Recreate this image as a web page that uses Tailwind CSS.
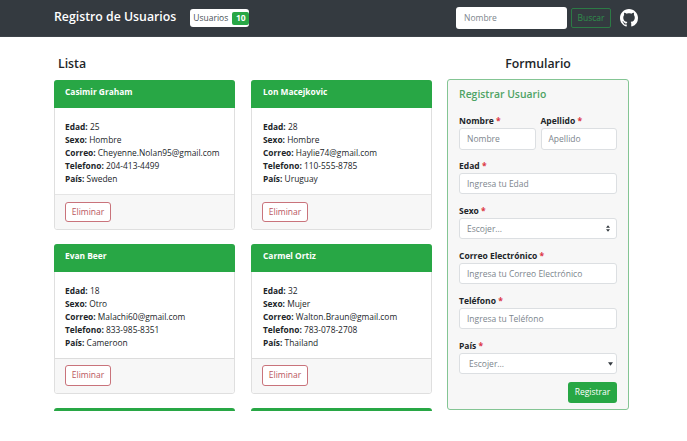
<!doctype html>
<html lang="es">
<head>
<meta charset="UTF-8">
<meta name="viewport" content="width=device-width, initial-scale=1.0">
<title>Registro de Usuarios</title>
<script src="https://cdn.jsdelivr.net/npm/@tailwindcss/browser@4"></script>
</head>
<body class="bg-white font-['Open_Sans',sans-serif] text-[#212529] h-[441px] w-[687px] overflow-hidden">
  <!-- navbar -->
  <nav class="h-[37px] bg-[#343a40] border-b border-b-[#3d4349] flex items-center pl-[54px] pr-[49px]">
    <div class="text-white text-[12.3px] font-semibold -mt-[2px]">Registro de Usuarios</div>
    <div class="ml-[14px] w-[59px] h-[18px] bg-white rounded-[3px] flex items-center pl-[3px] gap-[4px] text-[8.5px] text-[#495057]">
      Usuarios
      <span class="bg-[#28a745] text-white font-bold text-[8.5px] rounded-[2px] w-[17px] h-[13px] flex items-center justify-center">10</span>
    </div>
    <div class="grow"></div>
    <div class="w-[111px] h-[22px] bg-white rounded-[3px] flex items-center pl-[8px] text-[8.5px] text-[#7d868d]">Nombre</div>
    <div class="ml-[4px] w-[40px] h-[20px] border border-[#2c7a45] rounded-[2px] flex items-center justify-center text-[8.5px] text-[#2f8f4b]">Buscar</div>
    <svg class="ml-[9px] w-[18px] h-[18px]" viewBox="0 0 16 16" fill="#fff"><path d="M8 0C3.58 0 0 3.58 0 8c0 3.54 2.29 6.53 5.47 7.59.4.07.55-.17.55-.38 0-.19-.01-.82-.01-1.49-2.01.37-2.53-.49-2.69-.94-.09-.23-.48-.94-.82-1.13-.28-.15-.68-.52-.01-.53.63-.01 1.08.58 1.23.82.72 1.21 1.87.87 2.33.66.07-.52.28-.87.51-1.07-1.78-.2-3.64-.89-3.64-3.95 0-.87.31-1.59.82-2.15-.08-.2-.36-1.02.08-2.12 0 0 .67-.21 2.2.82.64-.18 1.32-.27 2-.27s1.36.09 2 .27c1.53-1.04 2.2-.82 2.2-.82.44 1.1.16 1.92.08 2.12.51.56.82 1.27.82 2.15 0 3.07-1.87 3.75-3.65 3.95.29.25.54.73.54 1.48 0 1.07-.01 1.93-.01 2.2 0 .21.15.46.55.38A8.01 8.01 0 0 0 16 8c0-4.42-3.58-8-8-8z"/></svg>
  </nav>

  <main class="h-[374px] overflow-hidden flex pl-[54px]">
    <!-- lista -->
    <section class="w-[378px]">
      <h2 class="pl-[4px] h-[43px] pt-[18px] text-[12.3px] font-semibold leading-[18px]">Lista</h2>
      <div class="grid grid-cols-[181px_181px] gap-x-[16px] gap-y-[14px]">

        <article class="h-[150px] border border-[#dfdfdf] rounded-[3px] flex flex-col">
          <div class="h-[28px] -mx-px -mt-px bg-[#28a745] rounded-t-[3px] text-white text-[8.4px] font-bold pl-[11px] pt-[6px]">Casimir Graham</div>
          <div class="grow pl-[10px] pt-[13.4px] text-[8.4px] leading-[12.8px]">
            <p><b>Edad:</b> 25</p>
            <p><b>Sexo:</b> Hombre</p>
            <p><b>Correo:</b> Cheyenne.Nolan95@gmail.com</p>
            <p><b>Telefono:</b> 204-413-4499</p>
            <p><b>País:</b> Sweden</p>
          </div>
          <div class="h-[35px] bg-[#f7f7f7] border-t border-t-[#e5e5e5] rounded-b-[3px] pl-[10px] pt-[7px]">
            <div class="w-[46px] h-[20px] bg-white border border-[#c9737b] rounded-[3px] flex items-center justify-center text-[8.5px] text-[#b9565f]">Eliminar</div>
          </div>
        </article>

        <article class="h-[150px] border border-[#dfdfdf] rounded-[3px] flex flex-col">
          <div class="h-[28px] -mx-px -mt-px bg-[#28a745] rounded-t-[3px] text-white text-[8.4px] font-bold pl-[12px] pt-[6px]">Lon Macejkovic</div>
          <div class="grow pl-[11px] pt-[13.4px] text-[8.4px] leading-[12.8px]">
            <p><b>Edad:</b> 28</p>
            <p><b>Sexo:</b> Hombre</p>
            <p><b>Correo:</b> Haylie74@gmail.com</p>
            <p><b>Telefono:</b> 110-555-8785</p>
            <p><b>País:</b> Uruguay</p>
          </div>
          <div class="h-[35px] bg-[#f7f7f7] border-t border-t-[#e5e5e5] rounded-b-[3px] pl-[10px] pt-[7px]">
            <div class="w-[46px] h-[20px] bg-white border border-[#c9737b] rounded-[3px] flex items-center justify-center text-[8.5px] text-[#b9565f]">Eliminar</div>
          </div>
        </article>

        <article class="h-[150px] border border-[#dfdfdf] rounded-[3px] flex flex-col">
          <div class="h-[28px] -mx-px -mt-px bg-[#28a745] rounded-t-[3px] text-white text-[8.4px] font-bold pl-[11px] pt-[6px]">Evan Beer</div>
          <div class="grow pl-[10px] pt-[13.4px] text-[8.4px] leading-[12.8px]">
            <p><b>Edad:</b> 18</p>
            <p><b>Sexo:</b> Otro</p>
            <p><b>Correo:</b> Malachi60@gmail.com</p>
            <p><b>Telefono:</b> 833-985-8351</p>
            <p><b>País:</b> Cameroon</p>
          </div>
          <div class="h-[35px] bg-[#f7f7f7] border-t border-t-[#dcdcdc] rounded-b-[3px] pl-[10px] pt-[6px]">
            <div class="w-[46px] h-[21px] bg-white border border-[#c9737b] rounded-[3px] flex items-center justify-center text-[8.5px] text-[#b9565f]">Eliminar</div>
          </div>
        </article>

        <article class="h-[150px] border border-[#dfdfdf] rounded-[3px] flex flex-col">
          <div class="h-[28px] -mx-px -mt-px bg-[#28a745] rounded-t-[3px] text-white text-[8.4px] font-bold pl-[12px] pt-[6px]">Carmel Ortiz</div>
          <div class="grow pl-[11px] pt-[13.4px] text-[8.4px] leading-[12.8px]">
            <p><b>Edad:</b> 32</p>
            <p><b>Sexo:</b> Mujer</p>
            <p><b>Correo:</b> Walton.Braun@gmail.com</p>
            <p><b>Telefono:</b> 783-078-2708</p>
            <p><b>País:</b> Thailand</p>
          </div>
          <div class="h-[35px] bg-[#f7f7f7] border-t border-t-[#dcdcdc] rounded-b-[3px] pl-[10px] pt-[6px]">
            <div class="w-[46px] h-[21px] bg-white border border-[#c9737b] rounded-[3px] flex items-center justify-center text-[8.5px] text-[#b9565f]">Eliminar</div>
          </div>
        </article>

        <div class="h-[28px] bg-[#28a745] rounded-t-[3px]"></div>
        <div class="h-[28px] bg-[#28a745] rounded-t-[3px]"></div>
      </div>
    </section>

    <!-- formulario -->
    <section class="ml-[15px] w-[182px]">
      <h2 class="h-[42px] pt-[18px] text-center text-[12.3px] font-semibold leading-[18px]">Formulario</h2>
      <form class="h-[331px] bg-[#f7f7f7] border border-[#84c594] rounded-[3px] px-[11px] pt-[6px]">
        <h3 class="text-[10.4px] font-semibold text-[#4ea364] leading-[16px] mb-[12px]">Registrar Usuario</h3>
        <div class="flex gap-[5px]">
          <div class="w-[77px]">
            <label class="block text-[8.5px] font-bold leading-[12px] pt-[1px] mb-[1px]">Nombre <span class="text-[#dc3545]">*</span></label>
            <div class="h-[22px] bg-white border border-[#dcdfe2] rounded-[3px] flex items-center pl-[7px] pt-[1px] text-[8.5px] text-[#7d868d]">Nombre</div>
          </div>
          <div class="w-[77px]">
            <label class="block text-[8.5px] font-bold leading-[12px] pt-[1px] mb-[1px]">Apellido <span class="text-[#dc3545]">*</span></label>
            <div class="h-[22px] bg-white border border-[#dcdfe2] rounded-[3px] flex items-center pl-[7px] pt-[1px] text-[8.5px] text-[#7d868d]">Apellido</div>
          </div>
        </div>
        <label class="block mt-[9px] text-[8.5px] font-bold leading-[12px] pt-[1px] mb-[1px]">Edad <span class="text-[#dc3545]">*</span></label>
        <div class="h-[21px] bg-white border border-[#dcdfe2] rounded-[3px] flex items-center pl-[7px] pt-[2px] text-[8.5px] text-[#7d868d]">Ingresa tu Edad</div>
        <label class="block mt-[10px] text-[8.5px] font-bold leading-[12px] pt-[1px] mb-[1px]">Sexo <span class="text-[#dc3545]">*</span></label>
        <div class="h-[21px] bg-white border border-[#dcdfe2] rounded-[3px] flex items-center justify-between pl-[7px] pr-[6px] pt-[2px] text-[8.5px] text-[#7d868d]">
          Escojer...
          <svg class="w-[4px] h-[7px] -mt-[2px]" viewBox="0 0 5 8" fill="#343a40"><path d="M2.5 0 5 3.2H0zM2.5 8 0 4.8h5z"/></svg>
        </div>
        <label class="block mt-[10px] text-[8.5px] font-bold leading-[12px] pt-[1px] mb-[1px]">Correo Electrónico <span class="text-[#dc3545]">*</span></label>
        <div class="h-[21px] bg-white border border-[#dcdfe2] rounded-[3px] flex items-center pl-[7px] pt-[2px] text-[8.5px] text-[#7d868d]">Ingresa tu Correo Electrónico</div>
        <label class="block mt-[10px] text-[8.5px] font-bold leading-[12px] pt-[1px] mb-[1px]">Teléfono <span class="text-[#dc3545]">*</span></label>
        <div class="h-[21px] bg-white border border-[#dcdfe2] rounded-[3px] flex items-center pl-[7px] pt-[2px] text-[8.5px] text-[#7d868d]">Ingresa tu Teléfono</div>
        <label class="block mt-[10px] text-[8.5px] font-bold leading-[12px] pt-[1px] mb-[1px]">País <span class="text-[#dc3545]">*</span></label>
        <div class="h-[21px] bg-white border border-[#dcdfe2] rounded-[3px] flex items-center justify-between pl-[9px] pr-[3px] pt-[2px] text-[8.5px] text-[#7d868d]">
          Escojer...
          <svg class="w-[5px] h-[4px] -mt-[2px]" viewBox="0 0 6 4" fill="#343a40"><path d="M0 0h6L3 4z"/></svg>
        </div>
        <div class="flex justify-end mt-[8px]">
          <div class="w-[49px] h-[21px] bg-[#28a745] rounded-[3px] flex items-center justify-center text-white text-[8.5px]">Registrar</div>
        </div>
      </form>
    </section>
  </main>
</body>
</html>
